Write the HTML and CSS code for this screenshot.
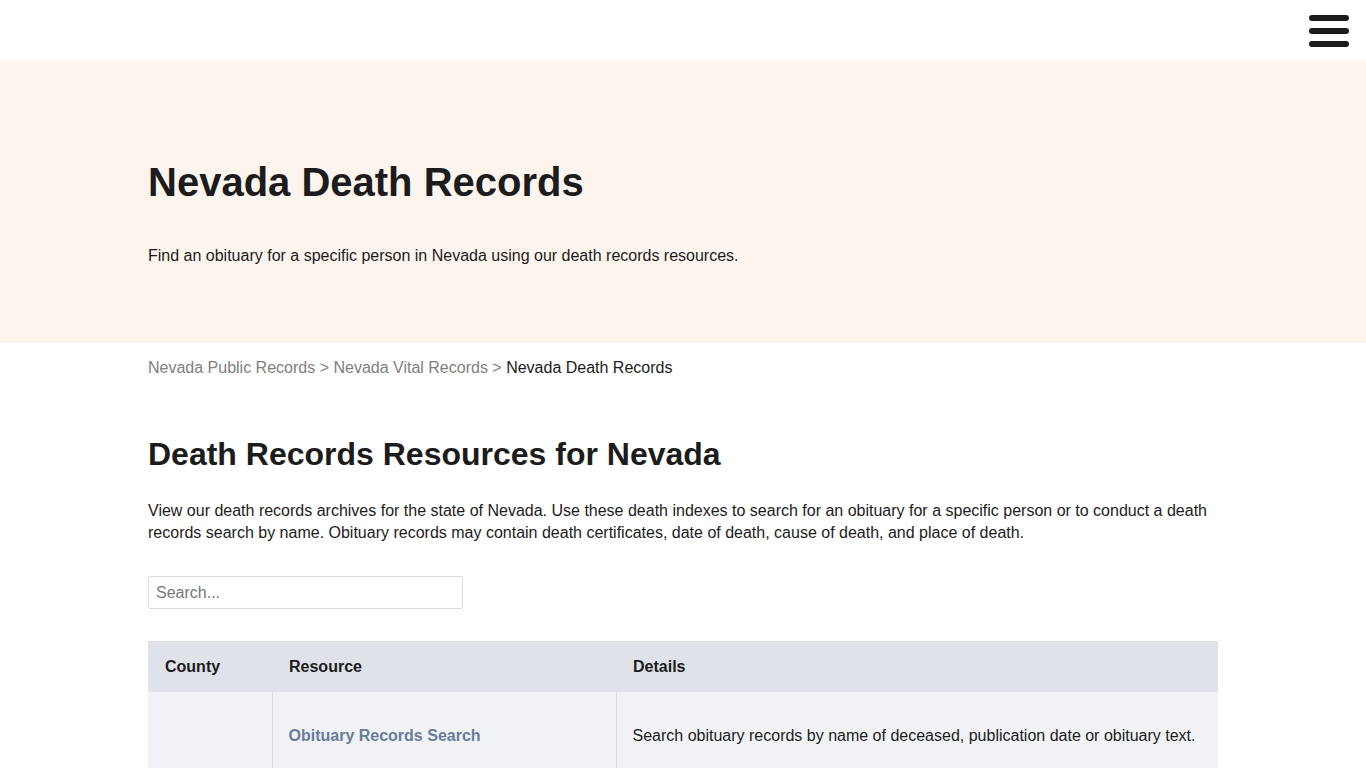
FILE: index.html
```html
<!DOCTYPE html>
<html lang="en">
<head>
<meta charset="utf-8">
<title>Nevada Death Records</title>
<link rel="stylesheet" href="styles.css">
</head>
<body>
<header class="topbar">
  <button class="menu-btn" aria-label="Menu">
    <span></span><span></span><span></span>
  </button>
</header>
<section class="hero">
  <div class="container">
    <h1 class="hero-title">Nevada Death Records</h1>
    <p class="hero-text">Find an obituary for a specific person in Nevada using our death records resources.</p>
  </div>
</section>
<main class="container">
  <nav class="crumbs">
    <a href="#">Nevada Public Records</a> &gt; <a href="#">Nevada Vital Records</a> &gt; <span class="current">Nevada Death Records</span>
  </nav>
  <h2 class="section-title">Death Records Resources for Nevada</h2>
  <p class="intro">View our death records archives for the state of Nevada. Use these death indexes to search for an obituary for a specific person or to conduct a death records search by name. Obituary records may contain death certificates, date of death, cause of death, and place of death.</p>
  <input class="search" type="text" placeholder="Search...">
  <table class="records">
    <thead>
      <tr><th class="c-county">County</th><th class="c-res">Resource</th><th>Details</th></tr>
    </thead>
    <tbody>
      <tr>
        <td></td>
        <td><a href="#" class="res-link">Obituary Records Search</a></td>
        <td>Search obituary records by name of deceased, publication date or obituary text.</td>
      </tr>
    </tbody>
  </table>
</main>
</body>
</html>
```
FILE: styles.css
```css
* { box-sizing: border-box; }
html, body { margin: 0; padding: 0; }
body {
  font-family: "Liberation Sans", Arial, sans-serif;
  color: #1c1c1c;
  background: #fff;
  font-size: 16px;
}
.topbar {
  height: 60px;
  display: flex;
  justify-content: flex-end;
  align-items: center;
  padding-right: 17px;
}
.menu-btn {
  width: 40px;
  height: 32px;
  padding: 0;
  border: 0;
  background: none;
  display: flex;
  flex-direction: column;
  justify-content: space-between;
  margin-top: 2px;
}
.menu-btn span {
  display: block;
  height: 6px;
  width: 40px;
  border-radius: 3px;
  background: #1c1c1c;
}
.container {
  width: 1070px;
  margin: 0 auto;
}
.hero {
  background: #fdf4ee;
  height: 283px;
  padding-top: 98px;
}
.hero-title {
  margin: 0;
  font-size: 40px;
  line-height: 48px;
  font-weight: 700;
  color: #1c1c1c;
}
.hero-text {
  margin: 39px 0 0;
  font-size: 16px;
  line-height: 22px;
}
.crumbs {
  margin-top: 14px;
  font-size: 16px;
  line-height: 22px;
  color: #808080;
}
.crumbs a { color: #808080; text-decoration: none; }
.crumbs .current { color: #1c1c1c; }
.section-title {
  margin: 55px 0 0;
  font-size: 32px;
  line-height: 40px;
  font-weight: 700;
}
.intro {
  margin: 26px 0 0;
  line-height: 22px;
  font-size: 16px;
}
.search {
  display: block;
  margin-top: 32px;
  width: 315px;
  height: 33px;
  border: 1px solid #dcdcdc;
  border-radius: 2px;
  padding: 0 7px;
  font-family: "Liberation Sans", Arial, sans-serif;
  font-size: 16px;
  color: #1c1c1c;
}
.search::placeholder { color: #777; }
.records {
  margin-top: 32px;
  width: 100%;
  border-collapse: collapse;
  font-size: 16px;
}
.records th {
  background: #dfe2e8;
  text-align: left;
  font-weight: 700;
  height: 51px;
  padding: 0 16px 0 17px;
}
.records th.c-county { width: 124px; }
.records th.c-res { width: 344px; }
.records td {
  background: #f0f2f5;
  height: 85px;
  padding: 2px 16px 0;
  border-left: 1px solid #d9dde3;
  vertical-align: middle;
}
.records td:first-child { border-left: 0; }
.res-link {
  color: #687d9b;
  font-weight: 700;
  text-decoration: none;
}
```
